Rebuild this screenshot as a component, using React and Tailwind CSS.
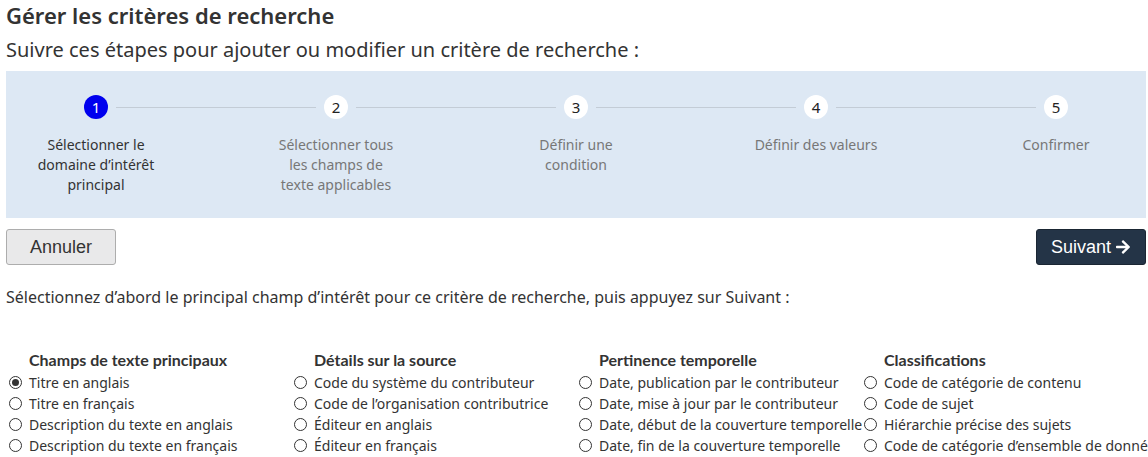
import React, { useState } from 'react';
import { FaArrowRight } from 'react-icons/fa';

const steps = [
  'Sélectionner le domaine d’intérêt principal',
  'Sélectionner tous les champs de texte applicables',
  'Définir une condition',
  'Définir des valeurs',
  'Confirmer',
];

const groups = [
  {
    title: 'Champs de texte principaux',
    items: ['Titre en anglais', 'Titre en français', 'Description du texte en anglais', 'Description du texte en français'],
  },
  {
    title: 'Détails sur la source',
    items: ['Code du système du contributeur', 'Code de l’organisation contributrice', 'Éditeur en anglais', 'Éditeur en français'],
  },
  {
    title: 'Pertinence temporelle',
    items: [
      'Date, publication par le contributeur',
      'Date, mise à jour par le contributeur',
      'Date, début de la couverture temporelle',
      'Date, fin de la couverture temporelle',
    ],
  },
  {
    title: 'Classifications',
    items: ['Code de catégorie de contenu', 'Code de sujet', 'Hiérarchie précise des sujets', 'Code de catégorie d’ensemble de données'],
  },
];

const Radio = ({ checked }) => (
  <span className="w-[13px] h-[13px] rounded-full border-[1.5px] border-[#333] flex items-center justify-center shrink-0">
    {checked && <span className="w-[7px] h-[7px] rounded-full bg-[#333]" />}
  </span>
);

const App = () => {
  const [selected, setSelected] = useState('Titre en anglais');

  return (
    <div className="w-[1148px] overflow-hidden pl-[6px] pr-[2px] text-[#333] font-['Noto_Sans',sans-serif]">
      <h1 className="text-[22px] font-semibold leading-[30px]">Gérer les critères de recherche</h1>
      <p className="text-[20px] leading-[30px] mt-[5px]">Suivre ces étapes pour ajouter ou modifier un critère de recherche :</p>

      <div className="mt-[6px] bg-[#dde8f4] pt-[24px] pb-[23px] flex justify-between">
        {steps.map((label, i) => (
          <div key={i} className="w-[180px] flex flex-col items-center relative">
            {i < steps.length - 1 && (
              <span className="absolute top-[11.5px] left-[110px] w-[200px] h-px bg-[#c3ccd6]" />
            )}
            <span
              className={
                i === 0
                  ? 'w-[24px] h-[24px] rounded-full bg-[#0000ee] text-white text-[15px] flex items-center justify-center'
                  : 'w-[24px] h-[24px] rounded-full bg-white text-[#222] text-[15px] flex items-center justify-center'
              }
            >
              {i + 1}
            </span>
            <span
              className={
                i === 0
                  ? 'mt-[16px] w-[126px] text-center text-[14px] leading-[20px] text-[#333]'
                  : 'mt-[16px] w-[126px] text-center text-[14px] leading-[20px] text-[#777]'
              }
            >
              {label}
            </span>
          </div>
        ))}
      </div>

      <div className="mt-[11px] flex justify-between font-['Liberation_Sans',Arial,sans-serif] text-[18px]">
        <button className="w-[110px] h-[36px] rounded-[3px] border border-[#adadad] bg-[#e9e9ea] text-[#333]">
          Annuler
        </button>
        <button className="w-[110px] h-[36px] rounded-[3px] border border-[#1a2633] bg-[#243447] text-white flex items-center justify-center gap-[4px]">
          Suivant <FaArrowRight className="text-[16px]" />
        </button>
      </div>

      <p className="mt-[22px] text-[16px] leading-[20px]">
        Sélectionnez d’abord le principal champ d’intérêt pour ce critère de recherche, puis appuyez sur Suivant :
      </p>

      <div className="mt-[43px] grid grid-cols-4 w-[1140px]">
        {groups.map((g) => (
          <div key={g.title} className="whitespace-nowrap">
            <h2 className="pl-[23px] font-['Lato',sans-serif] font-bold text-[16px] leading-[20px] text-[#333]">{g.title}</h2>
            <div className="mt-[2px] flex flex-col">
              {g.items.map((item) => (
                <label
                  key={item}
                  className="flex items-center gap-[7px] pl-[3px] text-[14px] leading-[21px] cursor-pointer"
                  onClick={() => setSelected(item)}
                >
                  <Radio checked={selected === item} />
                  <span>{item}</span>
                </label>
              ))}
            </div>
          </div>
        ))}
      </div>
    </div>
  );
};

export default App;
